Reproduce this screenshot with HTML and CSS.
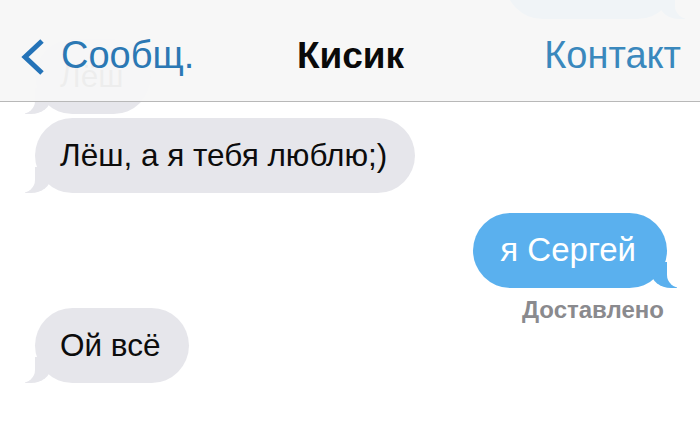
FILE: index.html
```html
<!DOCTYPE html>
<html lang="ru">
<head>
<meta charset="utf-8">
<title>Кисик</title>
<link rel="stylesheet" href="styles.css">
</head>
<body>
<div class="screen">
  <header class="navbar">
    <a class="nav-back">
      <svg class="chevron" width="26" height="36" viewBox="0 0 26 36">
        <path d="M22 2 L5 18 L22 34" fill="none" stroke="#2473b8" stroke-width="5"/>
      </svg>
      <span>Сообщ.</span>
    </a>
    <h1 class="nav-title">Кисик</h1>
    <a class="nav-action">Контакт</a>
  </header>

  <main class="thread">
    <div class="bubble out scrolled"></div>
    <div class="bubble in">Лёш</div>
    <div class="bubble in">Лёш, а я тебя люблю;)</div>
    <div class="bubble out gap">я Сергей</div>
    <div class="status">Доставлено</div>
    <div class="bubble in after-status">Ой всё</div>
  </main>
</div>
</body>
</html>
```

FILE: styles.css
```css
* {
  box-sizing: border-box;
}

html, body {
  margin: 0;
  padding: 0;
}

body {
  width: 700px;
  height: 422px;
  overflow: hidden;
  background: #ffffff;
  font-family: "Liberation Sans", Arial, sans-serif;
}

.screen {
  position: relative;
  width: 700px;
  height: 422px;
  overflow: hidden;
}

/* translucent top bar, content scrolls underneath it */
.navbar {
  position: absolute;
  top: 0;
  left: 0;
  right: 0;
  z-index: 10;
  height: 102px;
  padding: 10px 19px 0 20px;
  display: grid;
  grid-template-columns: 1fr auto 1fr;
  align-items: center;
  background: rgba(247, 247, 247, 0.96);
  border-bottom: 1px solid #b8b8b8;
}

.nav-back {
  display: flex;
  align-items: center;
  gap: 15px;
  color: #2b78b4;
  font-size: 38px;
}

.chevron {
  display: block;
  margin-top: 2px;
}

.nav-title {
  margin: 0;
  font-size: 37px;
  font-weight: 700;
  color: #0a0a0a;
}

.nav-action {
  justify-self: end;
  color: #3a88bd;
  font-size: 38px;
}

/* message list */
.thread {
  display: flex;
  flex-direction: column;
  padding: 0 33px 0 35px;
  margin-top: -56px;
}

.bubble {
  position: relative;
  padding: 18px 28px 19px 25px;
  font-size: 31.5px;
  line-height: 38px;
  border-radius: 38px;
  white-space: nowrap;
}

.bubble.in {
  align-self: flex-start;
  background: #e6e6eb;
  color: #0c0c0c;
  margin-top: 4px;
}

.bubble.out {
  align-self: flex-end;
  background: #5ab0ee;
  color: #ffffff;
  padding: 18px 31px 19px 27px;
  font-size: 33px;
}

/* the older outgoing message, mostly scrolled away under the bar */
.bubble.scrolled {
  width: 170px;
  height: 75px;
  margin-right: -8px;
}

.bubble.out + .bubble.in {
  margin-top: 20px;
}

.bubble.gap {
  margin-top: 20px;
}

/* tails */
.bubble::before,
.bubble::after {
  content: "";
  position: absolute;
  bottom: 0;
  height: 26px;
}

.bubble.in::before {
  left: -10px;
  width: 26px;
  background: #e6e6eb;
  border-bottom-right-radius: 20px 16px;
}

.bubble.in::after {
  left: -28px;
  width: 28px;
  background: #ffffff;
  border-bottom-right-radius: 14px 13px;
}

.bubble.out::before {
  right: -10px;
  width: 26px;
  background: #5ab0ee;
  border-bottom-left-radius: 20px 16px;
}

.bubble.out::after {
  right: -28px;
  width: 28px;
  background: #ffffff;
  border-bottom-left-radius: 14px 13px;
}

.status {
  align-self: flex-end;
  margin-top: 8px;
  margin-right: 3px;
  font-size: 24px;
  line-height: 28px;
  font-weight: 700;
  color: #8a8a8e;
}

.bubble.after-status {
  margin-top: -16px;
}
```
